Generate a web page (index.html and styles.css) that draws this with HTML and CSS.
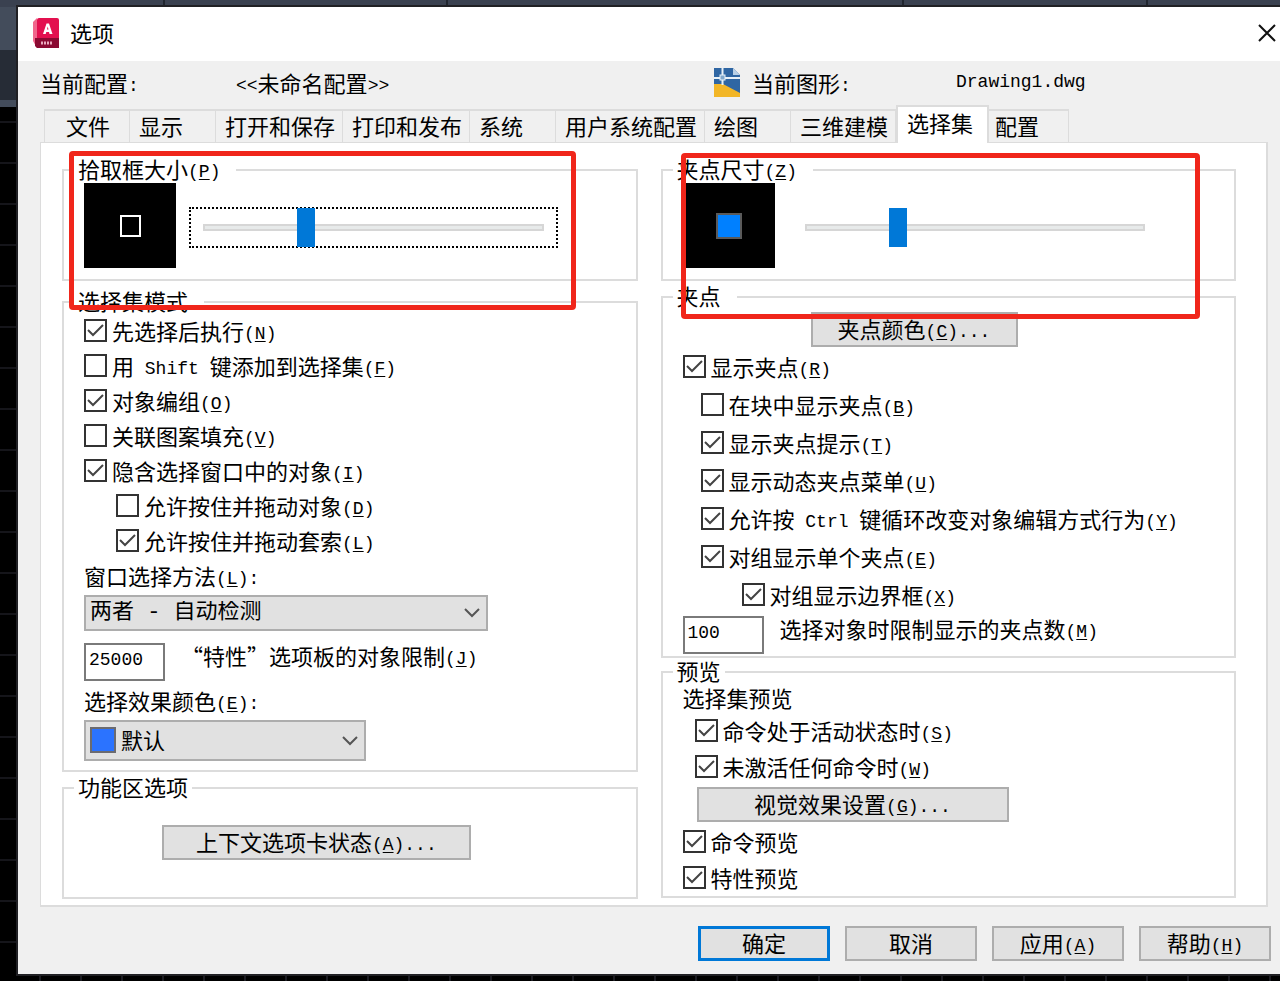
FILE: index.html
```html
<!DOCTYPE html>
<html lang="zh-CN">
<head>
    <meta charset="UTF-8">
    <meta name="viewport" content="width=device-width, initial-scale=1.0">
    <title>选项</title>
    <link rel="stylesheet" href="styles.css">
</head>
<body>
    <main class="dialog">
        <header class="title-bar">
            <svg class="app-icon" width="27" height="31" viewBox="0 0 27 31" aria-hidden="true">
                <path d="M0 4 L4 0 V30 L0 23 Z" fill="#f0668c"/>
                <rect x="4" y="0" width="22" height="22" rx="2" fill="#e3104f"/>
                <path d="M2 20 H26 V30 H4 L2 28 Z" fill="#8a0a32"/>
                <path d="M10 16 L13.500 5.500 H16 L19.500 16 H16.500 L16 14 H13.300 L12.700 16 Z M14 11.500 H15.500 L14.700 8.500 Z" fill="#fff" fill-rule="evenodd"/>
                <path d="M8 25 H20" stroke="#e9a9bd" stroke-width="3" stroke-dasharray="2 1"/>
            </svg>
            <h1>选项</h1>
            <button class="close" aria-label="关闭">
                <svg width="18" height="18" viewBox="0 0 18 18"><path d="M1 1 L17 17 M17 1 L1 17" stroke="#111" stroke-width="2"/></svg>
            </button>
        </header>

        <div class="info">
            <span>当前配置<span class="en">:</span></span>
            <span class="profile"><span class="en">&lt;&lt;</span>未命名配置<span class="en">&gt;&gt;</span></span>
            <span class="drawing">
                <svg width="26" height="29" viewBox="0 0 26 29" aria-hidden="true">
                    <path d="M0 0 H19 L26 7 V29 H0 Z" fill="#2f66a3"/>
                    <path d="M19 0 L26 7 H19 Z" fill="#b9d0e6"/>
                    <path d="M0 16 H9 L26 25 V29 H0 Z" fill="#f2b627"/>
                    <path d="M8.500 0 V17 M0 10 H26" stroke="#e8f1f8" stroke-width="2"/>
                    <rect x="6" y="7" width="5" height="5" fill="#7fa7cc" stroke="#e8f1f8"/>
                </svg>
                <span>当前图形<span class="en">:</span></span>
            </span>
            <span class="en">Drawing1.dwg</span>
        </div>

        <nav class="tabs" role="tablist">
            <button class="first" role="tab">文件</button>
            <button role="tab">显示</button>
            <button role="tab">打开和保存</button>
            <button role="tab">打印和发布</button>
            <button role="tab">系统</button>
            <button role="tab">用户系统配置</button>
            <button role="tab">绘图</button>
            <button role="tab">三维建模</button>
            <button class="active" role="tab" aria-selected="true">选择集</button>
            <button class="last" role="tab">配置</button>
        </nav>

        <section class="panel">
            <div class="column">
                <fieldset class="size-group">
                    <legend class="wide">拾取框大小<span class="en">(<u>P</u>)</span></legend>
                    <div class="size-row">
                        <div class="preview"><span class="pickbox"></span></div>
                        <input class="slider focused" type="range" min="0" max="100" value="29" aria-label="拾取框大小">
                    </div>
                </fieldset>

                <fieldset class="modes">
                    <legend class="wide">选择集模式</legend>
                    <div class="group-body">
                        <label class="check"><input type="checkbox" checked><span>先选择后执行<span class="en">(<u>N</u>)</span></span></label>
                        <label class="check"><input type="checkbox"><span>用<span class="en"> Shift </span>键添加到选择集<span class="en">(<u>F</u>)</span></span></label>
                        <label class="check"><input type="checkbox" checked><span>对象编组<span class="en">(<u>O</u>)</span></span></label>
                        <label class="check"><input type="checkbox"><span>关联图案填充<span class="en">(<u>V</u>)</span></span></label>
                        <label class="check"><input type="checkbox" checked><span>隐含选择窗口中的对象<span class="en">(<u>I</u>)</span></span></label>
                        <label class="check sub"><input type="checkbox"><span>允许按住并拖动对象<span class="en">(<u>D</u>)</span></span></label>
                        <label class="check sub"><input type="checkbox" checked><span>允许按住并拖动套索<span class="en">(<u>L</u>)</span></span></label>

                        <label class="caption" for="method">窗口选择方法<span class="en">(<u>L</u>):</span></label>
                        <select class="method" id="method">
                            <option>两者 - 自动检测</option>
                        </select>

                        <div class="number-row">
                            <input type="text" id="limit" value="25000">
                            <label for="limit">“特性”选项板的对象限制<span class="en">(<u>J</u>)</span></label>
                        </div>

                        <label class="caption" for="effectColor">选择效果颜色<span class="en">(<u>E</u>):</span></label>
                        <div class="color-select">
                            <select id="effectColor">
                                <option>默认</option>
                            </select>
                            <span class="swatch"></span>
                        </div>
                    </div>
                </fieldset>

                <fieldset class="ribbon">
                    <legend>功能区选项</legend>
                    <button class="push">上下文选项卡状态<span class="en">(<u>A</u>)...</span></button>
                </fieldset>
                <div class="highlight"></div>
            </div>

            <div class="column">
                <fieldset class="size-group">
                    <legend class="wide">夹点尺寸<span class="en">(<u>Z</u>)</span></legend>
                    <div class="size-row">
                        <div class="preview"><span class="grip"></span></div>
                        <input class="slider" type="range" min="0" max="100" value="26" aria-label="夹点尺寸">
                    </div>
                </fieldset>

                <fieldset class="grips">
                    <legend class="wide">夹点</legend>
                    <div class="group-body">
                        <button class="push grip-color">夹点颜色<span class="en">(<u>C</u>)...</span></button>
                        <label class="check"><input type="checkbox" checked><span>显示夹点<span class="en">(<u>R</u>)</span></span></label>
                        <label class="check sub"><input type="checkbox"><span>在块中显示夹点<span class="en">(<u>B</u>)</span></span></label>
                        <label class="check sub"><input type="checkbox" checked><span>显示夹点提示<span class="en">(<u>T</u>)</span></span></label>
                        <label class="check sub"><input type="checkbox" checked><span>显示动态夹点菜单<span class="en">(<u>U</u>)</span></span></label>
                        <label class="check sub"><input type="checkbox" checked><span>允许按<span class="en"> Ctrl </span>键循环改变对象编辑方式行为<span class="en">(<u>Y</u>)</span></span></label>
                        <label class="check sub"><input type="checkbox" checked><span>对组显示单个夹点<span class="en">(<u>E</u>)</span></span></label>
                        <label class="check sub-2"><input type="checkbox" checked><span>对组显示边界框<span class="en">(<u>X</u>)</span></span></label>
                        <div class="number-row">
                            <input type="text" id="gripLimit" value="100">
                            <label for="gripLimit">选择对象时限制显示的夹点数<span class="en">(<u>M</u>)</span></label>
                        </div>
                    </div>
                </fieldset>

                <fieldset class="previews">
                    <legend>预览</legend>
                    <div class="group-body">
                        <p>选择集预览</p>
                        <label class="check sub"><input type="checkbox" checked><span>命令处于活动状态时<span class="en">(<u>S</u>)</span></span></label>
                        <label class="check sub"><input type="checkbox" checked><span>未激活任何命令时<span class="en">(<u>W</u>)</span></span></label>
                        <button class="push effects">视觉效果设置<span class="en">(<u>G</u>)...</span></button>
                        <label class="check"><input type="checkbox" checked><span>命令预览</span></label>
                        <label class="check"><input type="checkbox" checked><span>特性预览</span></label>
                    </div>
                </fieldset>
                <div class="highlight"></div>
            </div>
        </section>

        <footer class="actions">
            <button class="push default">确定</button>
            <button class="push">取消</button>
            <button class="push">应用<span class="en">(<u>A</u>)</span></button>
            <button class="push">帮助<span class="en">(<u>H</u>)</span></button>
        </footer>
    </main>
</body>
</html>
```
FILE: styles.css
```css
:root {
    --face: #f0f0f0;
    --button: #e1e1e1;
    --button-border: #adadad;
    --line: #dcdcdc;
    --accent: #0078d7;
    --mark: #f0261b;
    --row: 35px;
}

* {
    margin: 0;
    padding: 0;
    box-sizing: border-box;
}

/* drawing area and ribbon behind the dialog */
body {
    min-height: 100vh;
    padding: 7px 0 7px 18px;
    background-color: #000;
    background-image:
        linear-gradient(90deg, #3a4150 163px, #20252e 163px 165px, #3a4150 165px 446px, #20252e 446px 448px, #3a4150 448px 902px, #20252e 902px 904px, #3a4150 904px 1146px, #20252e 1146px 1148px, #3a4150 1148px),
        linear-gradient(#434c5b 50px, #262c36 50px, #262c36 100px, #434c5b 100px),
        repeating-linear-gradient(90deg, transparent 0 39px, #1c1c22 39px 41px),
        repeating-linear-gradient(transparent 0 39px, #15151a 39px 41px);
    background-size: 100% 7px, 18px 107px, auto, auto;
    background-repeat: no-repeat, no-repeat, repeat, repeat;
    color: #000;
}

body,
button,
input,
select {
    font-family: "Noto Sans CJK SC", sans-serif;
    font-size: 22px;
    line-height: 24px;
}

.en {
    font-family: "Liberation Mono", monospace;
    font-size: 18px;
    line-height: 16px;
    vertical-align: 1px;
    white-space: pre;
}

u {
    text-underline-offset: 2px;
}

.dialog {
    background: var(--face);
    box-shadow: 0 0 0 2px #202024;
}

.title-bar {
    display: flex;
    align-items: center;
    height: 54px;
    padding: 0 4px 2px 15px;
    background: #fff;
}

.title-bar h1 {
    flex: 1;
    margin-left: 10px;
    padding-bottom: 2px;
    font-size: 22px;
    font-weight: 400;
}

.close {
    height: 18px;
    border: none;
    background: none;
}

.close svg {
    display: block;
}

.info {
    display: grid;
    grid-template-columns: 196px 478px 242px 1fr;
    align-items: center;
    height: 44px;
    padding: 0 0 2px 22px;
    white-space: nowrap;
}

.drawing {
    display: flex;
    align-items: center;
    gap: 12px;
}

.tabs {
    display: flex;
    align-items: flex-end;
    height: 37px;
    padding-left: 26px;
}

.tabs button {
    min-width: 86px;
    height: 33px;
    padding: 0 7px 4px 9px;
    border: solid var(--line);
    border-width: 2px 1px 0 0;
    background: var(--face);
    text-align: left;
}

.tabs .first {
    border-left-width: 1px;
    text-align: center;
}

.tabs .active {
    height: 38px;
    min-width: 93px;
    margin-bottom: -1px;
    padding-bottom: 7px;
    border-width: 2px 2px 0;
    background: #fff;
    z-index: 1;
}

.tabs .last {
    min-width: 80px;
    padding-left: 6px;
}

.panel {
    display: grid;
    grid-template-columns: 1fr 1fr;
    gap: 23px;
    margin: 0 12px 0 22px;
    padding: 16px 30px 6px 21px;
    border: solid var(--line);
    border-width: 1px 2px 2px 1px;
    background: #fff;
}

.column {
    position: relative;
    min-width: 0;
}

fieldset {
    min-width: 0;
    border: 2px solid var(--line);
}

legend {
    height: 22px;
    margin-left: 10px;
    padding: 0 4px;
    line-height: 18px;
}

legend.wide {
    padding-right: 16px;
}

.group-body {
    padding: 0 20px;
}

.size-group {
    height: 122px;
}

.size-row {
    display: flex;
    align-items: center;
    padding: 2px 78px 0 20px;
    gap: 13px;
}

.preview {
    display: grid;
    place-items: center;
    width: 92px;
    height: 85px;
    background: #000;
}

.pickbox {
    width: 21px;
    height: 22px;
    border: 2px solid #fff;
}

.grip {
    width: 26px;
    height: 26px;
    border: 2px solid #5a5a5a;
    background: #0080ff;
}

.slider {
    appearance: none;
    flex: 1;
    min-width: 0;
    height: 41px;
    margin-top: 3px;
    padding: 0 14px;
    background: none;
}

.slider.focused {
    border: 2px dotted #000;
    padding: 0 12px;
}

.slider::-webkit-slider-runnable-track {
    height: 7px;
    border: 2px solid #d6d6d6;
    background: #e7eaea;
}

.slider::-webkit-slider-thumb {
    appearance: none;
    width: 18px;
    height: 39px;
    margin-top: -18px;
    background: var(--accent);
}

.column + .column .size-row {
    gap: 16px;
    padding-right: 75px;
}

.check {
    display: flex;
    align-items: center;
    gap: 5px;
    height: var(--row);
    white-space: nowrap;
}

.check span {
    margin-top: -1px;
}

.check input {
    appearance: none;
    flex: none;
    width: 23px;
    height: 23px;
    border: 2px solid #333;
    background: #fff;
}

.check input:checked {
    background-image: url("data:image/svg+xml,%3Csvg xmlns='http://www.w3.org/2000/svg' viewBox='0 0 19 19'%3E%3Cpath d='M2 9 L7 14 L17 4' fill='none' stroke='%23444' stroke-width='2'/%3E%3C/svg%3E");
}

.modes {
    margin-top: 10px;
}

.modes .sub {
    margin-left: 32px;
}

.caption {
    display: block;
    height: 24px;
    margin: 5px 0 8px;
}

select {
    appearance: none;
    display: block;
    padding: 0 0 3px 4px;
    border: 2px solid var(--button-border);
    border-radius: 0;
    background: var(--button) url("data:image/svg+xml,%3Csvg xmlns='http://www.w3.org/2000/svg' width='16' height='10'%3E%3Cpath d='M1 1 L8 8 L15 1' fill='none' stroke='%23555' stroke-width='2'/%3E%3C/svg%3E") no-repeat right 6px center;
    color: #000;
}

.method {
    width: 76%;
    height: 36px;
    padding-bottom: 0;
    font-family: "Liberation Mono", "Noto Sans CJK SC", monospace;
}

.number-row {
    display: flex;
    gap: 16px;
    white-space: nowrap;
}

.number-row input {
    width: 81px;
    height: 38px;
    padding: 0 3px 4px;
    border: 2px solid #7a7a7a;
    font-family: "Liberation Mono", monospace;
    font-size: 18px;
}

.modes .number-row {
    margin: 12px 0 7px;
}

.color-select {
    position: relative;
    width: 53%;
    margin-bottom: 9px;
}

.color-select select {
    width: 100%;
    height: 41px;
    padding-left: 35px;
}

.swatch {
    position: absolute;
    left: 6px;
    top: 7px;
    width: 26px;
    height: 26px;
    border: 2px solid #6b6b70;
    background: #2b73ff;
}

.push {
    height: 35px;
    padding-bottom: 4px;
    border: 2px solid var(--button-border);
    background: var(--button);
    color: #000;
    white-space: nowrap;
}

.ribbon {
    height: 122px;
    margin-top: 5px;
}

.ribbon .push {
    display: block;
    width: 54%;
    margin: 26px auto 0 98px;
}

.grips {
    --row: 38px;
    margin-top: 5px;
    padding-bottom: 2px;
}

.grips .sub {
    margin-left: 18px;
}

.grips .sub-2 {
    margin-left: 59px;
}

.grip-color {
    display: block;
    width: 207px;
    margin: 4px 0 0 128px;
}

.grips .number-row {
    margin-top: 3px;
}

.previews {
    --row: 36px;
    margin-top: 3px;
    padding-bottom: 1px;
}

.previews p {
    margin: 2px 0 3px;
}

.previews .sub {
    margin-left: 12px;
}

.effects {
    display: block;
    width: 312px;
    margin: 3px 0 1px 14px;
}

/* red frames drawn over the two size groups */
.highlight {
    position: absolute;
    top: -8px;
    left: 7px;
    right: 62px;
    height: 159px;
    border: 5px solid var(--mark);
    border-radius: 4px;
    pointer-events: none;
}

.column + .column .highlight {
    top: -6px;
    left: 20px;
    right: 36px;
    height: 166px;
}

.actions {
    display: flex;
    justify-content: flex-end;
    gap: 15px;
    padding: 19px 9px 13px;
}

.actions .push {
    width: 132px;
}

.actions .default {
    border: 3px solid var(--accent);
}
```
